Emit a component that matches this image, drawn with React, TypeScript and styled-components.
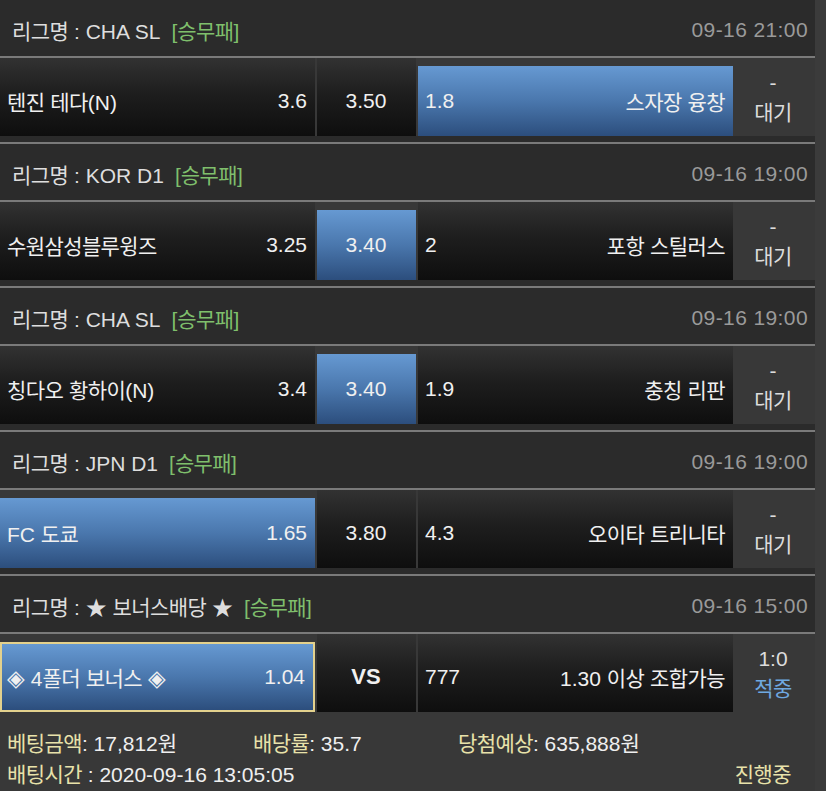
import React from "react";
import styled, { createGlobalStyle, css } from "styled-components";

const Global = createGlobalStyle`
  html, body { margin: 0; padding: 0; background: #3b3b3b; }
  body { font-family: "Liberation Sans", "Noto Sans CJK KR", sans-serif; }
`;

const Page = styled.div`
  width: 815px;
  background: #2b2b2b;
`;

const Block = styled.section<{ $last?: boolean }>`
  border-bottom: ${(p) => (p.$last ? "none" : "2px solid #7a7a7a")};
`;

const Header = styled.div`
  height: 58px;
  box-sizing: border-box;
  padding: 4px 7px 0 12px;
  display: flex;
  align-items: center;
  justify-content: space-between;
  background: #2b2b2b;
  border-bottom: 2px solid #7a7a7a;
  font-size: 21px;
  color: #dedede;
`;

const League = styled.span`
  white-space: pre;
`;

const Kind = styled.span`
  color: #7fbf6c;
  margin-left: 11px;
`;

const Time = styled.span`
  color: #9a9a9a;
  letter-spacing: 0.4px;
`;

const Hn = styled.span`
  letter-spacing: -0.6px;
`;

const Row = styled.div<{ $last?: boolean }>`
  height: 78px;
  display: grid;
  grid-template-columns: 315px 99px 315px 1fr;
  column-gap: 2px;
  background: #383838;
  border-bottom: ${(p) => (p.$last ? "none" : "6px solid #2b2b2b")};
`;

const Cell = styled.div<{ $active?: boolean; $bonus?: boolean; $center?: boolean }>`
  display: flex;
  align-items: center;
  justify-content: ${(p) => (p.$center ? "center" : "space-between")};
  box-sizing: border-box;
  padding: 0 8px 0 7px;
  font-size: 21px;
  color: #f0f0f0;
  white-space: pre;
  ${(p) =>
    p.$active
      ? css`
          margin-top: 8px;
          background: linear-gradient(180deg, #6699d2 0%, #4a77ad 50%, #2c4e7d 100%);
        `
      : css`
          padding-top: 8px;
          background: linear-gradient(180deg, #323232 0%, #1e1e1e 45%, #0e0e0e 100%);
        `}
  ${(p) =>
    p.$bonus &&
    css`
      border: 2px solid #e3d18d;
      padding: 0 8px 0 5px;
    `}
`;

const Vs = styled.span`
  font-weight: bold;
  font-size: 22px;
`;

const Diamond = styled.span`
  font-size: 23px;
`;

const Status = styled.div`
  display: flex;
  flex-direction: column;
  align-items: center;
  justify-content: center;
  font-size: 21px;
  line-height: 30px;
  color: #dcdcdc;
  padding: 2px 4px 0 0;
`;

const Hit = styled.span`
  color: #6fa8e0;
`;

const Footer = styled.div`
  height: 79px;
  box-sizing: border-box;
  background: #383838;
  padding: 15px 24px 0 7px;
  display: grid;
  grid-template-columns: 246px 205px 1fr;
  grid-template-rows: 31px 31px;
  font-size: 21px;
  color: #efefef;
`;

const Info = styled.div<{ $right?: boolean }>`
  white-space: pre;
  ${(p) =>
    p.$right &&
    css`
      grid-column: 3;
      text-align: right;
    `}
`;

const Label = styled.span`
  color: #e8e2aa;
`;

const ko = (text: string) =>
  text.split(/([\uAC00-\uD7A3]+|◈)/).map((part, i) =>
    part === "◈" ? (
      <Diamond key={i}>{part}</Diamond>
    ) : /[\uAC00-\uD7A3]/.test(part) ? (
      <Hn key={i}>{part}</Hn>
    ) : (
      <React.Fragment key={i}>{part}</React.Fragment>
    )
  );

type Match = {
  league: string;
  time: string;
  home: string;
  homeOdds: string;
  draw: string;
  awayOdds: string;
  away: string;
  pick: "home" | "draw" | "away";
  bonus?: boolean;
};

const matches: Match[] = [
  { league: "CHA SL", time: "09-16 21:00", home: "텐진 테다(N)", homeOdds: "3.6", draw: "3.50", awayOdds: "1.8", away: "스자장 융창", pick: "away" },
  { league: "KOR D1", time: "09-16 19:00", home: "수원삼성블루윙즈", homeOdds: "3.25", draw: "3.40", awayOdds: "2", away: "포항 스틸러스", pick: "draw" },
  { league: "CHA SL", time: "09-16 19:00", home: "칭다오 황하이(N)", homeOdds: "3.4", draw: "3.40", awayOdds: "1.9", away: "충칭 리판", pick: "draw" },
  { league: "JPN D1", time: "09-16 19:00", home: "FC 도쿄", homeOdds: "1.65", draw: "3.80", awayOdds: "4.3", away: "오이타 트리니타", pick: "home" },
  { league: "★ 보너스배당 ★", time: "09-16 15:00", home: "◈ 4폴더 보너스 ◈", homeOdds: "1.04", draw: "VS", awayOdds: "777", away: "1.30 이상 조합가능", pick: "home", bonus: true },
];

export default function App() {
  return (
    <>
      <Global />
      <Page>
        {matches.map((m, i) => {
          const last = i === matches.length - 1;
          return (
            <Block key={i} $last={last}>
              <Header>
                <span>
                  <League>{ko(`리그명 : ${m.league}`)}</League>
                  <Kind>[{ko("승무패")}]</Kind>
                </span>
                <Time>{m.time}</Time>
              </Header>
              <Row $last={last}>
                <Cell $active={m.pick === "home"} $bonus={m.bonus}>
                  <span>{ko(m.home)}</span>
                  <span>{m.homeOdds}</span>
                </Cell>
                <Cell $active={m.pick === "draw"} $center>
                  {m.bonus ? <Vs>{m.draw}</Vs> : <span>{m.draw}</span>}
                </Cell>
                <Cell $active={m.pick === "away"}>
                  <span>{m.awayOdds}</span>
                  <span>{ko(m.away)}</span>
                </Cell>
                {m.bonus ? (
                  <Status>
                    <span>1:0</span>
                    <Hit>{ko("적중")}</Hit>
                  </Status>
                ) : (
                  <Status>
                    <span>-</span>
                    <span>{ko("대기")}</span>
                  </Status>
                )}
              </Row>
            </Block>
          );
        })}
        <Footer>
          <Info>
            <Label>{ko("베팅금액")}</Label>: 17,812{ko("원")}
          </Info>
          <Info>
            <Label>{ko("배당률")}</Label>: 35.7
          </Info>
          <Info>
            <Label>{ko("당첨예상")}</Label>: 635,888{ko("원")}
          </Info>
          <Info>
            <Label>{ko("배팅시간")}</Label> : 2020-09-16 13:05:05
          </Info>
          <Info $right>
            <Label>{ko("진행중")}</Label>
          </Info>
        </Footer>
      </Page>
    </>
  );
}
